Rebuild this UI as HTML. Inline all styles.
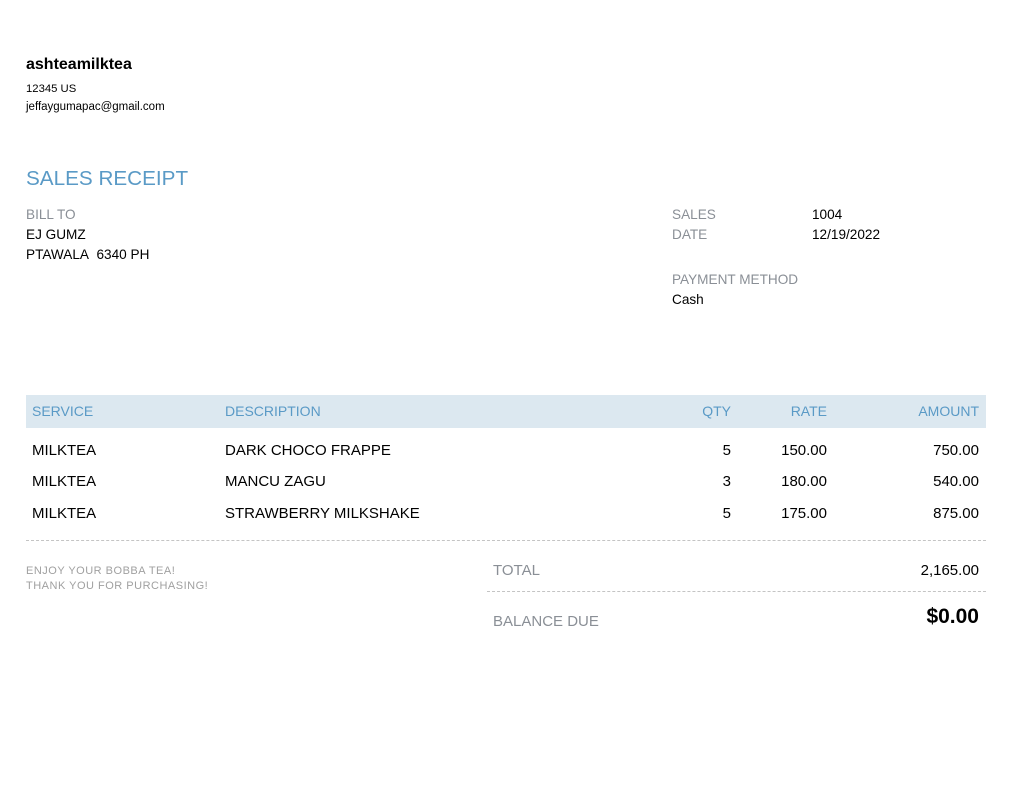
<!DOCTYPE html>
<html><head><style>
body{margin:0;width:1012px;height:802px;background:#fff;font-family:"Liberation Sans",sans-serif;position:relative;overflow:hidden}
.a{position:absolute;white-space:nowrap}
.g{color:#8a8f96}
.b{color:#000}
.r{text-align:right}
</style></head><body>
<div class="a b" style="left:26px;top:56px;font-size:16px;font-weight:bold">ashteamilktea</div>
<div class="a b" style="left:26px;top:83px;font-size:11.3px">12345 US</div>
<div class="a b" style="left:26px;top:101px;font-size:11.5px">jeffaygumapac@gmail.com</div>
<div class="a" style="left:26px;top:167px;font-size:20.7px;color:#5a9ac6">SALES RECEIPT</div>
<div class="a g" style="left:26px;top:207px;font-size:13.6px">BILL TO</div>
<div class="a b" style="left:26px;top:227px;font-size:13.6px">EJ GUMZ</div>
<div class="a b" style="left:26px;top:247px;font-size:13.6px">PTAWALA&nbsp; 6340 PH</div>
<div class="a g" style="left:672px;top:207px;font-size:13.6px">SALES</div>
<div class="a b" style="left:812px;top:207px;font-size:13.6px">1004</div>
<div class="a g" style="left:672px;top:227px;font-size:13.6px">DATE</div>
<div class="a b" style="left:812px;top:227px;font-size:13.6px">12/19/2022</div>
<div class="a g" style="left:672px;top:272px;font-size:13.6px">PAYMENT METHOD</div>
<div class="a b" style="left:672px;top:292px;font-size:13.6px">Cash</div>
<div class="a" style="left:26px;top:395px;width:960px;height:33px;background:#dce8f0"></div>
<div class="a" style="left:32px;top:403px;font-size:14px;color:#5a9ac6">SERVICE</div>
<div class="a" style="left:225px;top:403px;font-size:14px;color:#5a9ac6">DESCRIPTION</div>
<div class="a r" style="right:281px;top:403px;font-size:14px;color:#5a9ac6">QTY</div>
<div class="a r" style="right:185px;top:403px;font-size:14px;color:#5a9ac6">RATE</div>
<div class="a r" style="right:33px;top:403px;font-size:14px;color:#5a9ac6">AMOUNT</div>

<div class="a b" style="left:32px;top:442px;font-size:15px">MILKTEA</div>
<div class="a b" style="left:225px;top:442px;font-size:15px">DARK CHOCO FRAPPE</div>
<div class="a b" style="right:281px;top:442px;font-size:15px">5</div>
<div class="a b" style="right:185px;top:442px;font-size:15px">150.00</div>
<div class="a b" style="right:33px;top:442px;font-size:15px">750.00</div>

<div class="a b" style="left:32px;top:473px;font-size:15px">MILKTEA</div>
<div class="a b" style="left:225px;top:473px;font-size:15px">MANCU ZAGU</div>
<div class="a b" style="right:281px;top:473px;font-size:15px">3</div>
<div class="a b" style="right:185px;top:473px;font-size:15px">180.00</div>
<div class="a b" style="right:33px;top:473px;font-size:15px">540.00</div>

<div class="a b" style="left:32px;top:505px;font-size:15px">MILKTEA</div>
<div class="a b" style="left:225px;top:505px;font-size:15px">STRAWBERRY MILKSHAKE</div>
<div class="a b" style="right:281px;top:505px;font-size:15px">5</div>
<div class="a b" style="right:185px;top:505px;font-size:15px">175.00</div>
<div class="a b" style="right:33px;top:505px;font-size:15px">875.00</div>

<div class="a" style="left:26px;top:540px;width:960px;border-top:1px dashed #c4c4c4"></div>
<div class="a g" style="left:26px;top:565px;font-size:11px;letter-spacing:0.5px;color:#a0a0a0">ENJOY YOUR BOBBA TEA!</div>
<div class="a g" style="left:26px;top:580px;font-size:11px;letter-spacing:0.5px;color:#a0a0a0">THANK YOU FOR PURCHASING!</div>
<div class="a g" style="left:493px;top:562px;font-size:15px">TOTAL</div>
<div class="a b" style="right:33px;top:562px;font-size:15px">2,165.00</div>
<div class="a" style="left:487px;top:591px;width:499px;border-top:1px dashed #c4c4c4"></div>
<div class="a g" style="left:493px;top:613px;font-size:15px">BALANCE DUE</div>
<div class="a b" style="right:33px;top:605px;font-size:21px;font-weight:bold">$0.00</div>
</body></html>
